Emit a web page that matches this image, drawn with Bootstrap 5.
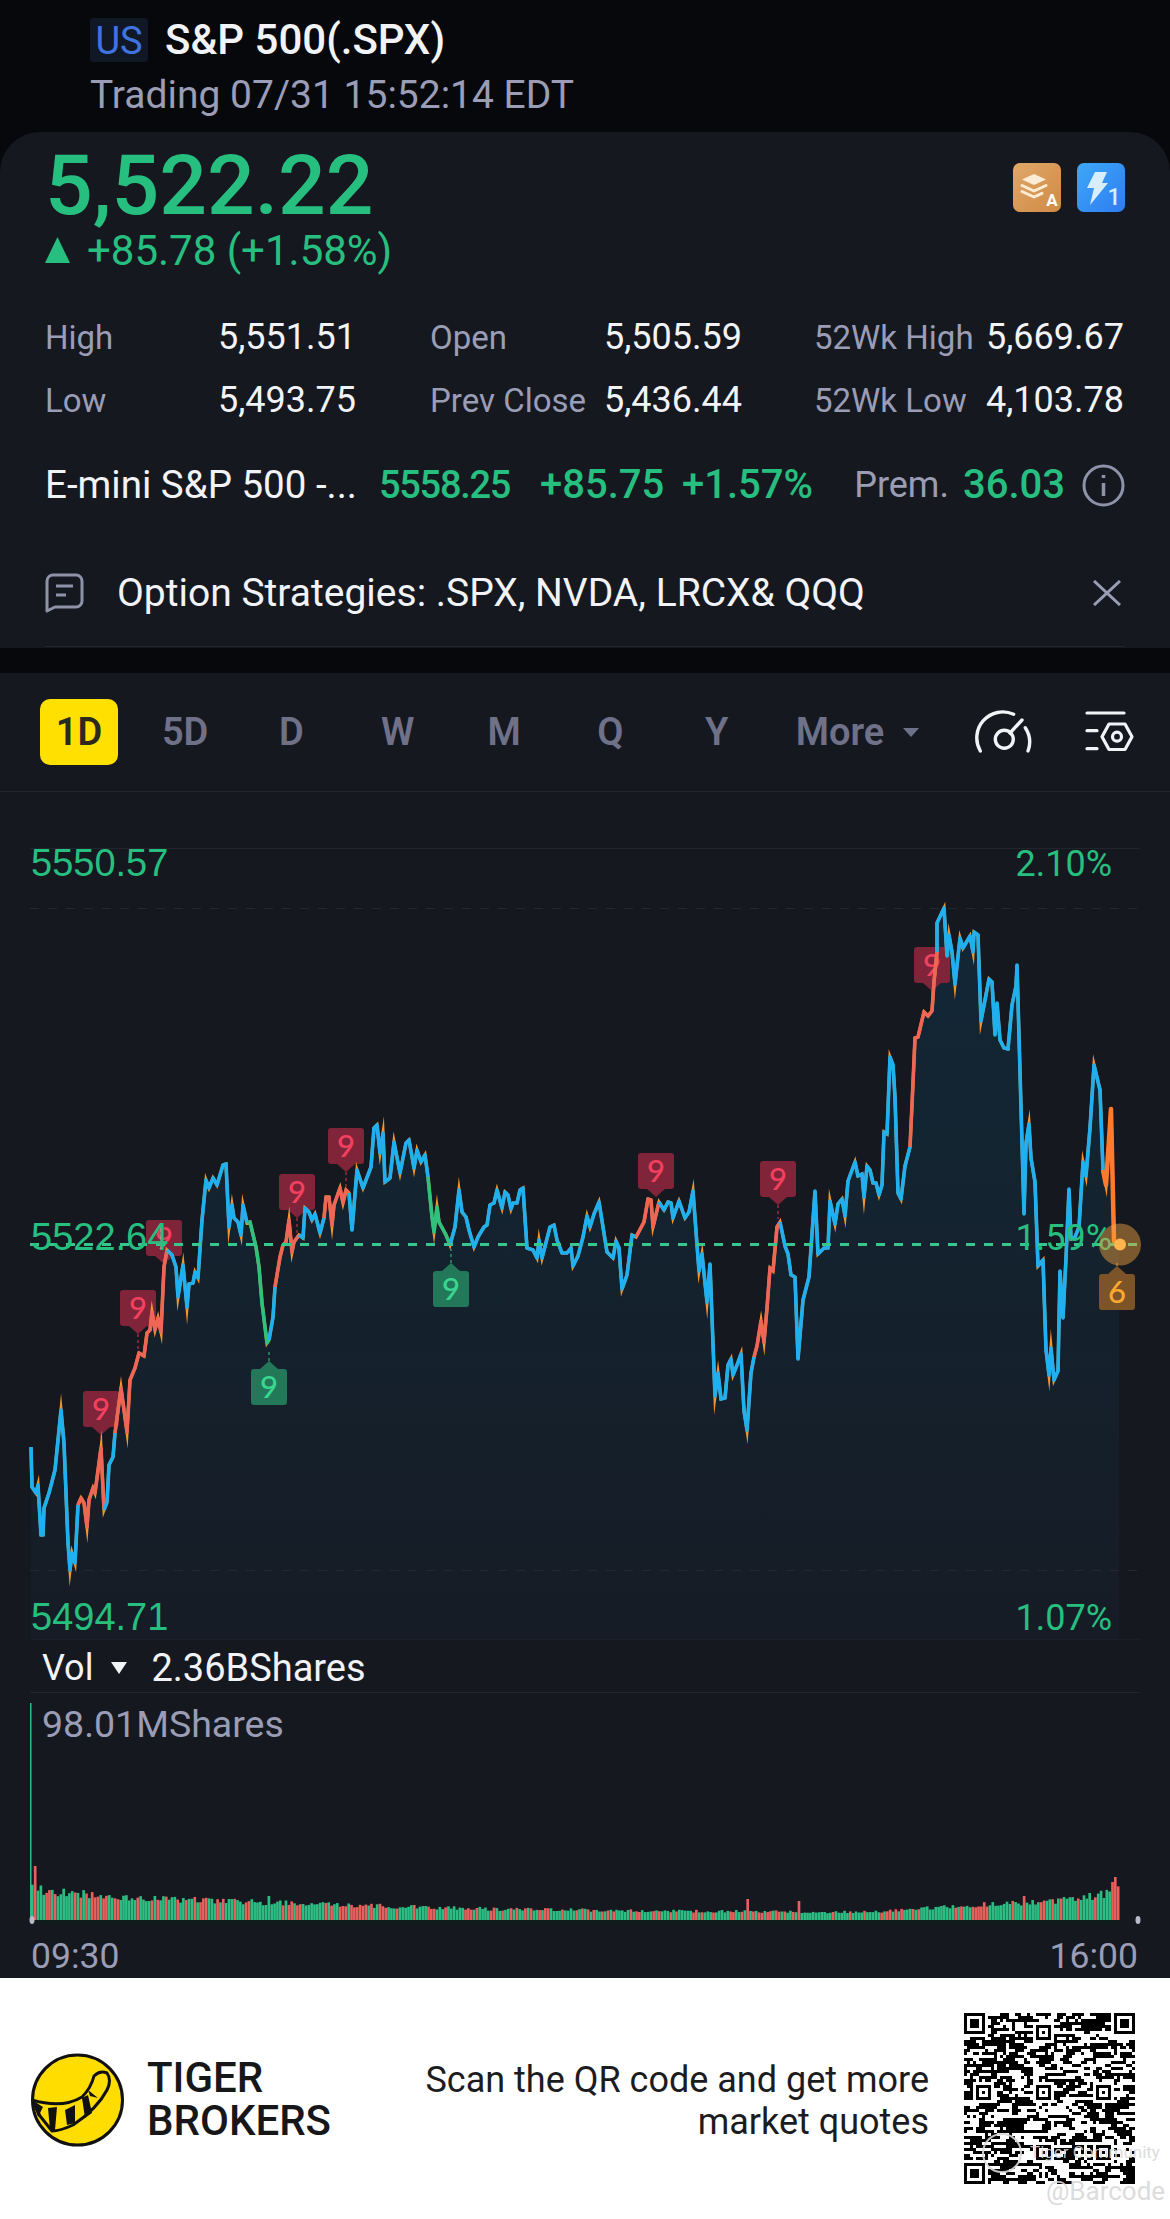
<!DOCTYPE html>
<html lang="en">
<head>
  <meta charset="UTF-8">
  <meta name="viewport" content="width=device-width, initial-scale=1">
  <title>S&amp;P 500 quote</title>
  <link href="https://cdn.jsdelivr.net/npm/bootstrap@5.3.0/dist/css/bootstrap.min.css" rel="stylesheet">
  <style>
    body {
      background-color: #07080c;
      font-family: Roboto, "Liberation Sans", sans-serif;
      width: 1170px;
      color: #f2f3f7;
    }
    svg { display: block; }
    .muted-text { color: #9a9db5; }
    .up-text { color: #27bf7f; }

    .quote-head { height: 132px; padding: 18px 0 0 90px; }
    .market-tag {
      width: 58px; height: 44px; margin-right: 17px; border-radius: 4px;
      background-color: #101826; color: #3f74e0; font-size: 38px; line-height: 46px; text-align: center;
    }
    .quote-title { font-size: 42px; line-height: 44px; font-weight: 500; }
    .quote-status { font-size: 39px; line-height: 44px; margin-top: 11px; }

    .quote-panel {
      height: 516px; padding: 0 45px; border-radius: 40px 40px 0 0;
      background-color: #161820;
    }
    .panel-inner { height: 515px; border-bottom: 1px solid #23252e; }
    .price-big { font-size: 84px; line-height: 84px; font-weight: 500; padding-top: 12px; }
    .price-change { font-size: 42px; line-height: 46px; }
    .up-arrow { width: 25px; height: 26px; margin-right: 17px; margin-top: 9px; }
    .level-badges { padding-top: 31px; }
    .stat-grid {
      display: grid; grid-template-columns: 173px 212px 174px 210px 172px auto;
      font-size: 36px; line-height: 63px; margin-top: 32px; padding-right: 2px;
    }
    .stat-name { font-size: 33px; }
    .future-row { font-size: 38.500px; line-height: 44px; margin-top: 31px; }
    .future-name { width: 334px; }
    .future-last { width: 161px; font-size: 38px; font-weight: 500; letter-spacing: -1.300px; }
    .future-move { width: 142px; font-size: 40px; font-weight: 500; }
    .future-pct { font-size: 40px; font-weight: 500; }
    .prem-name { font-size: 36px; margin-right: 14px; }
    .prem-value { font-size: 40px; font-weight: 500; margin-right: 17px; }
    .strategy-row { font-size: 39px; line-height: 44px; margin-top: 64px; }
    .strategy-text { margin-left: 9px; }

    .chart-section { margin-top: 25px; background-color: #161820; height: 1305px; }
    .range-bar { height: 119px; border-bottom: 1px solid #23252e; }
    .range-active {
      width: 78px; height: 66px; border-radius: 10px; margin-left: 40px;
      background-color: #ffe000; color: #2a2a1e; line-height: 66px; text-align: center;
    }
    .range-bar span, .range-active { font-size: 38px; font-weight: 600; }
    .range-item { color: #6f7189; width: 106.3px; text-align: center; }
    .range-first { margin-left: 14px; }
    .range-more { color: #6f7189; margin-left: 26px; white-space: nowrap; }
    .more-caret {
      width: 0; height: 0; margin-left: 19px;
      border-left: 8px solid transparent; border-right: 8px solid transparent; border-top: 9px solid #6f7189;
    }
    .gauge-icon { margin-left: 53px; }
    .tune-icon { margin-left: 51px; }
    .chart-label { font-family: "Liberation Sans", sans-serif; font-size: 38px; fill: #27bf7f; }
    .chart-pct { font-family: Roboto, sans-serif; font-size: 36px; fill: #27bf7f; text-anchor: end; }
    .badge-digit { font-family: Lato, sans-serif; font-size: 31px; font-weight: 500; text-anchor: middle; }

    .vol-row {
      height: 53px; margin: 0 30px; padding: 4px 0 0 12px;
      border-bottom: 1px solid #23252e; font-size: 38px; line-height: 44px;
    }
    .vol-name { font-size: 36px; }
    .vol-caret {
      width: 0; height: 0; margin: 0 24px 0 18px;
      border-left: 8px solid transparent; border-right: 8px solid transparent; border-top: 12px solid #f2f3f7;
    }
    .vol-box { position: relative; height: 241px; }
    .vol-peak { position: absolute; left: 42px; top: 10px; font-size: 37.500px; line-height: 42px; }
    .time-row { height: 44px; padding: 0 32px 0 31px; font-size: 35.500px; line-height: 44px; }

    .promo-band { position: relative; height: 241px; background-color: #fff; color: #111; }
    .brand-logo { margin: 75px 0 0 31px; }
    .brand-name { font-size: 42px; line-height: 43px; font-weight: 500; margin: 78px 0 0 23px; color: #17171a; }
    .promo-copy {
      position: absolute; right: 241px; top: 81px;
      font-size: 36px; line-height: 42px; text-align: right; color: #1c1c1f;
    }
    .qr-box { position: absolute; left: 964px; top: 35px; }
    .wm-text { position: absolute; color: rgba(215, 215, 215, .9); white-space: nowrap; }
    .wm-community { left: 1030px; top: 164px; font-size: 17px; line-height: 20px; }
    .wm-barcode { left: 1046px; top: 198px; font-size: 26px; line-height: 30px; }
    .wm-ring { position: absolute; left: 982px; top: 155px; width: 40px; height: 40px; border: 2px solid rgba(215, 215, 215, .9); border-radius: 50%; }
  </style>
</head>
<body class="m-0">

  <header class="quote-head">
    <div class="d-flex align-items-center">
      <div class="market-tag">US</div>
      <div class="quote-title">S&amp;P 500(.SPX)</div>
    </div>
    <div class="quote-status muted-text">Trading 07/31 15:52:14 EDT</div>
  </header>

  <section class="quote-panel">
    <div class="panel-inner">
      <div class="d-flex justify-content-between">
        <div>
          <div class="price-big up-text">5,522.22</div>
          <div class="price-change up-text d-flex">
            <svg class="up-arrow" viewBox="0 0 25 26"><path d="M12.5 0 25 26H0z" fill="#27bf7f"/></svg>
            <span>+85.78 (+1.58%)</span>
          </div>
        </div>
        <div class="level-badges d-flex gap-3">
          <svg width="48" height="49" viewBox="0 0 48 49">
            <defs><linearGradient id="goldFill" x1="0" y1="0" x2="1" y2="1"><stop offset="0" stop-color="#e0a868"/><stop offset="1" stop-color="#d08a45"/></linearGradient></defs>
            <rect width="48" height="49" rx="7" fill="url(#goldFill)"/>
            <path d="M21 11 33 16.500 21 22 9 16.500z" fill="#fbecd6"/>
            <path d="M9 22.500 21 28 33 22.500M9 28.500 21 34 29 30.300" fill="none" stroke="#fbecd6" stroke-width="3" stroke-linecap="round" stroke-linejoin="round"/>
            <text x="39" y="43" text-anchor="middle" font-family="Roboto, sans-serif" font-size="17" font-weight="700" fill="#fff">A</text>
          </svg>
          <svg width="48" height="49" viewBox="0 0 48 49">
            <defs><linearGradient id="blueFill" x1="0" y1="0" x2="1" y2="1"><stop offset="0" stop-color="#3da8f8"/><stop offset="1" stop-color="#2f7cf0"/></linearGradient></defs>
            <rect width="48" height="49" rx="7" fill="url(#blueFill)"/>
            <path d="M18 9h12l-5 11h6L13 42l4-17h-7z" fill="#d8eeff"/>
            <text x="37" y="42" text-anchor="middle" font-family="Roboto, sans-serif" font-size="23" font-weight="500" fill="#d8eeff">1</text>
          </svg>
        </div>
      </div>

      <div class="stat-grid">
        <div class="muted-text stat-name">High</div><div>5,551.51</div>
        <div class="muted-text stat-name">Open</div><div>5,505.59</div>
        <div class="muted-text stat-name">52Wk High</div><div class="text-end">5,669.67</div>
        <div class="muted-text stat-name">Low</div><div>5,493.75</div>
        <div class="muted-text stat-name">Prev Close</div><div>5,436.44</div>
        <div class="muted-text stat-name">52Wk Low</div><div class="text-end">4,103.78</div>
      </div>

      <div class="future-row d-flex align-items-center">
        <div class="future-name text-truncate">E-mini S&amp;P 500 -...</div>
        <div class="future-last up-text">5558.25</div>
        <div class="future-move up-text">+85.75</div>
        <div class="future-pct up-text">+1.57%</div>
        <div class="prem-name muted-text ms-auto">Prem.</div>
        <div class="prem-value up-text">36.03</div>
        <svg width="43" height="43" viewBox="0 0 43 43">
          <circle cx="21.500" cy="21.500" r="19.500" fill="none" stroke="#8f92a8" stroke-width="3"/>
          <path d="M21.500 19v13M21.500 11v3" stroke="#8f92a8" stroke-width="3.500"/>
        </svg>
      </div>

      <div class="strategy-row d-flex align-items-center">
        <svg class="me-4" width="39" height="40" viewBox="0 0 39 40">
          <path d="M8 2h23a6 6 0 0 1 6 6v20a6 6 0 0 1-6 6H10l-8 4V8a6 6 0 0 1 6-6z" fill="none" stroke="#8f92a8" stroke-width="3" stroke-linejoin="round"/>
          <path d="M11 13h17M11 22h10" stroke="#8f92a8" stroke-width="3"/>
        </svg>
        <div class="strategy-text flex-grow-1">Option Strategies: .SPX, NVDA, LRCX&amp; QQQ</div>
        <svg class="me-1" width="28" height="26" viewBox="0 0 28 26">
          <path d="M1 1 27 25M27 1 1 25" stroke="#9a9db5" stroke-width="3"/>
        </svg>
      </div>
    </div>
  </section>

  <section class="chart-section">
    <div class="range-bar d-flex align-items-center">
      <div class="range-active">1D</div>
      <span class="range-item range-first">5D</span>
      <span class="range-item">D</span>
      <span class="range-item">W</span>
      <span class="range-item">M</span>
      <span class="range-item">Q</span>
      <span class="range-item">Y</span>
      <span class="range-more">More</span>
      <div class="more-caret"></div>
      <svg class="gauge-icon" width="62" height="50" viewBox="30 26 62 50">
        <g fill="none" stroke="#f2f3f7" stroke-width="3.400" stroke-linecap="round">
          <circle cx="62.300" cy="58.300" r="9"/>
          <path d="M38.300 70A26 26 0 0 1 71.600 33.300M83.300 46.700A26 26 0 0 1 86 70M68 52 80 39"/>
        </g>
      </svg>
      <svg class="tune-icon" width="50" height="44" viewBox="146 32 50 44">
        <g fill="none" stroke="#f2f3f7" stroke-width="3.200" stroke-linecap="round" stroke-linejoin="round">
          <path d="M148 35h37M148 52.700h10M148 70.700h10"/>
          <path d="M163 58.700 170 46h16l7 12.700-7 12.800h-16z"/>
          <circle cx="178" cy="58.700" r="4.500"/>
        </g>
      </svg>
    </div>

    <svg id="priceChart" width="1170" height="848" viewBox="0 792 1170 848"></svg>

    <div class="vol-row d-flex align-items-center">
      <span class="vol-name">Vol</span><div class="vol-caret"></div><span>2.36BShares</span>
    </div>
    <div class="vol-box">
      <svg id="volChart" width="1170" height="241" viewBox="0 1694 1170 241"></svg>
      <div class="vol-peak muted-text">98.01MShares</div>
    </div>
    <div class="time-row d-flex justify-content-between muted-text">
      <span>09:30</span><span>16:00</span>
    </div>
  </section>

  <section class="promo-band d-flex align-items-start">
    <svg class="brand-logo" width="93" height="94" viewBox="21 23 93 94">
      <defs><clipPath id="logoClip"><circle cx="67.500" cy="70" r="45"/></clipPath></defs>
      <circle cx="67.500" cy="70" r="45" fill="#ffdd00" stroke="#111" stroke-width="3"/>
      <g clip-path="url(#logoClip)">
        <path d="M22 70Q52 79 72 67 81 58 84 46 90 40 97 43 102 50 97 60 87 79 63 95 50 101 42 101L30 86z" fill="#ffdd00" stroke="#111" stroke-width="3" stroke-linejoin="round"/>
        <path d="M22 70 33 77 28 87z M38 78 47 77 45 100 40 100z M55 80 65 75 65 93 57 95z M72 68 78 65 82 83 75 88z M78 60 88 68 80 66z" fill="#111"/>
      </g>
    </svg>
    <div class="brand-name">TIGER<br>BROKERS</div>
    <div class="promo-copy">Scan the QR code and get more<br>market quotes</div>
    <svg class="qr-box" id="qrCode" width="171" height="171" viewBox="0 0 57 57" shape-rendering="crispEdges"></svg>
    <div class="wm-ring"></div>
    <div class="wm-text wm-community">Tiger Community</div>
    <div class="wm-text wm-barcode">@Barcode</div>
  </section>

  <script>
    const BLUE = "#1fb0f0", SALMON = "#ee6656", GREEN = "#2fc27c", ORANGE = "#ff7a2c";

    // traced off the reference, in page pixels; each run carries on from the last point of the one before
    const runs = [
      [BLUE, "31,1447 32,1487 36,1493 38,1485 41,1535 43,1535 44,1508 49,1493 55,1470 61,1410 64,1443 68,1543 70,1570 72,1553 75,1563 78,1505"],
      [SALMON, "81,1498 84,1503 87,1527 89,1500 93,1488 95,1493 101,1448 104,1510"],
      [BLUE, "107,1502 109,1465 113,1457 115,1433"],
      [SALMON, "121,1388 127,1432 130,1380 135,1368 139,1353 144,1356 147,1333 150,1330 152,1312 155,1330 158,1318 161,1332 164,1267 167,1250"],
      [BLUE, "172,1255 176,1267 178,1297 183,1265 187,1307 189,1284 193,1283 195,1272 198,1278 202,1220 206,1180 209,1188 213,1178 217,1185 223,1165 226,1164 229,1227 232,1205 234,1218 238,1222 241,1235 243,1205 247,1223"],
      [GREEN, "250,1222 256,1247 259,1267 262,1303 267,1343 269,1340"],
      [BLUE, "273,1317 275,1287"],
      [SALMON, "280,1257 283,1245 286,1242 289,1220 292,1252 294,1242 299,1235"],
      [BLUE, "303,1238 305,1208 309,1212 312,1220 315,1214 320,1233 324,1218"],
      [SALMON, "326,1197 329,1197 332,1225 334,1205 340,1188 343,1203 346,1190 349,1193"],
      [BLUE, "352,1230 357,1170 363,1188 371,1167 374,1128 377,1125 380,1153 383,1133 385,1182 390,1178 394,1142 400,1173 406,1143 409,1140 414,1168 417,1150 421,1162 425,1155 428,1177"],
      [GREEN, "432,1217 434,1232 437,1207 439,1222 446,1235 450,1245"],
      [BLUE, "455,1227 459,1190 462,1212 466,1217 469,1230 474,1247 478,1237 484,1227 487,1225 490,1205 494,1203 497,1190 502,1208 505,1192 508,1195 511,1209 513,1203 517,1203 520,1190 523,1188 527,1248 533,1250 537,1258 539,1240 542,1258 550,1227 554,1225 557,1240 562,1253 567,1253 571,1248 573,1266 578,1256 583,1237 587,1216 590,1227 594,1214 599,1202 607,1252 613,1258 616,1241 619,1248 622,1289 627,1275 632,1235 636,1237"],
      [SALMON, "644,1222 648,1199 651,1200 653,1227 659,1202"],
      [BLUE, "664,1210 668,1202 671,1203 673,1218 679,1201 685,1218 689,1212 693,1191 698,1258 699,1271 702,1254 707,1302 710,1264 715,1396 718,1373 721,1399 725,1398 728,1365 731,1359 733,1375 737,1365 741,1354 744,1411 747,1430 751,1373 754,1357"],
      [SALMON, "757,1346 761,1321 764,1342 767,1308 770,1268 773,1271 777,1227 780,1222"],
      [BLUE, "785,1246 788,1254 791,1275 795,1277 798,1359 803,1300 809,1277 815,1191 818,1254 824,1248 828,1248 830,1201 835,1224 838,1204 842,1199 845,1216 848,1181 855,1162 858,1176 862,1174 864,1197 867,1166 870,1170 873,1183 876,1183 879,1195 882,1185 884,1132 887,1134 890,1057 893,1065 895,1097 898,1193 901,1199 905,1166 910,1147"],
      [SALMON, "912,1105 915,1038 918,1037 924,1012 928,1016 932,1011 934,982 937,952"],
      [BLUE, "937,923 944,908 947,956 949,935 952,952 955,984 960,938 963,948 970,936 973,952 974,932 978,935 981,1021 989,979 992,982 995,1035 997,1003 1000,1040 1004,1048 1008,1049 1012,1005 1016,986 1017,965 1024,1214 1026,1143 1029,1124 1031,1158 1035,1182 1038,1266 1043,1260 1046,1350 1049,1375 1051,1348 1054,1380 1058,1371 1060,1271 1063,1318 1066,1258 1069,1189 1071,1239 1075,1237 1079,1227 1083,1162 1086,1176 1090,1128 1094,1065 1100,1090 1103,1170"],
      [ORANGE, "1106,1185 1111,1109 1114,1241 1120,1244"]
    ];

    // [center x, center y, digit, colour set, tip direction, stem length]
    const badges = [
      [101, 1409, "9", "red", 1, 13], [138, 1308, "9", "red", 1, 18], [164, 1238, "9", "red", 1, 4],
      [297, 1192, "9", "red", 1, 16], [346, 1146, "9", "red", 1, 16], [656, 1171, "9", "red", 1, 0],
      [778, 1179, "9", "red", 1, 14], [932, 965, "9", "red", 1, 4],
      [269, 1387, "9", "green", -1, 12], [451, 1289, "9", "green", -1, 14], [1117, 1292, "6", "amber", -1, 4]
    ];
    const badgeColours = {
      red: ["#7f2439", "#f4405f"], green: ["#23785a", "#3ad690"], amber: ["#7d5428", "#fba92e"]
    };

    function drawPriceChart() {
      const allPts = [];
      let lines = "";
      runs.forEach(([colour, pts]) => {
        const start = allPts.length ? allPts[allPts.length - 1] + " " : "";
        lines += `<polyline points="${start}${pts}" fill="none" stroke="${colour}" stroke-width="${colour === ORANGE ? 4.5 : 3.6}" stroke-linejoin="round"/>`;
        pts.split(" ").forEach(p => allPts.push(p));
      });
      const joined = allPts.join(" ");

      let badgeMarkup = "";
      badges.forEach(([x, y, digit, kind, dir, stem]) => {
        const [boxFill, textFill] = badgeColours[kind];
        const edge = y + dir * 18;
        const tip = edge + dir * 8;
        badgeMarkup += `<path d="M${x} ${tip}v${dir * stem}" stroke="${boxFill}" stroke-width="2" stroke-dasharray="3 3"/>`
          + `<rect x="${x - 18}" y="${y - 18}" width="36" height="36" rx="3" fill="${boxFill}"/>`
          + `<path d="M${x - 9} ${edge}L${x} ${tip}L${x + 9} ${edge}z" fill="${boxFill}"/>`
          + `<text class="badge-digit" x="${x}" y="${y + 11}" fill="${textFill}">${digit}</text>`;
      });

      document.getElementById("priceChart").innerHTML = `
        <defs><linearGradient id="areaFill" x1="0" y1="0" x2="0" y2="1">
          <stop offset="0" stop-color="#122736"/><stop offset=".5" stop-color="#14222e"/><stop offset="1" stop-color="#161c26"/>
        </linearGradient></defs>
        <polygon points="31,1640 ${joined} 1119,1244 1119,1640" fill="url(#areaFill)"/>
        <path d="M30 848.500H1140M30 1640H1140" stroke="#23252e"/>
        <path d="M30 908.500H1140M30 1570.500H1140" stroke="#262831" stroke-dasharray="9 9"/>
        ${badgeMarkup}
        <polyline points="${joined}" fill="none" stroke="#f2962a" stroke-width="3.200" stroke-linejoin="miter" stroke-miterlimit="12"/>
        ${lines}
        <path d="M30 1244.500H1140" stroke="#35c78d" stroke-width="3" stroke-dasharray="9 9"/>
        <text class="chart-label" x="31" y="876">5550.57</text>
        <text class="chart-pct" x="1112" y="876">2.10%</text>
        <text class="chart-label" x="31" y="1250">5522.64</text>
        <text class="chart-pct" x="1112" y="1250">1.59%</text>
        <text class="chart-label" x="31" y="1630">5494.71</text>
        <text class="chart-pct" x="1112" y="1630">1.07%</text>
        <circle cx="1120" cy="1244.500" r="21" fill="#f9a640" fill-opacity=".45"/>
        <circle cx="1120" cy="1244.500" r="6" fill="#fdb54c"/>`;
    }

    // small repeatable generator so the bars and the QR come out the same each run
    function seeded(seed) {
      return () => (seed = (seed * 1664525 + 1013904223) >>> 0) / 4294967296;
    }

    function volumeEnvelope(x) {
      const stops = [[31, 42], [40, 30], [70, 28], [110, 24], [200, 20], [350, 15], [500, 11], [700, 9], [870, 8], [950, 14], [1050, 19], [1095, 25], [1118, 30]];
      for (let i = 1; i < stops.length; i++) {
        if (x <= stops[i][0]) {
          const [x0, y0] = stops[i - 1], [x1, y1] = stops[i];
          return y0 + (y1 - y0) * (x - x0) / (x1 - x0);
        }
      }
      return 30;
    }

    function drawVolume() {
      const rand = seeded(4711);
      const spikes = { 268: 24, 746: 21, 797: 19, 1022: 24, 1113: 43, 1110: 38, 33: 54 };
      let bars = "";
      for (let i = 0; i < 382; i++) {
        const x = 31 + i * 2.85;
        let h = volumeEnvelope(x) * (0.82 + rand() * 0.32);
        let colour = rand() < 0.68 ? "#2dbd82" : "#e8605c";
        Object.keys(spikes).forEach(s => {
          if (Math.abs(s - x) < 1.5) {
            h = spikes[s];
            colour = s == 268 ? "#2dbd82" : "#e8605c";
          }
        });
        bars += `<rect x="${x.toFixed(2)}" y="${(1921 - h).toFixed(1)}" width="2.650" height="${h.toFixed(1)}" fill="${colour}"/>`;
      }
      document.getElementById("volChart").innerHTML = `
        <rect x="30" y="1704" width="1.500" height="217" fill="#2dbd82"/>
        ${bars}
        <rect x="31" y="1921" width="1087" height="4" fill="#101c1a"/>
        <ellipse cx="32" cy="1921" rx="2.500" ry="4" fill="#b8bac8"/>
        <ellipse cx="1138" cy="1921" rx="2.500" ry="4" fill="#b8bac8"/>`;
    }

    function drawQr() {
      const size = 57;
      const rand = seeded(20240731);
      const grid = [];
      for (let y = 0; y < size; y++) {
        grid.push([]);
        for (let x = 0; x < size; x++) {
          const keep = x > 0 && rand() < 0.42;
          grid[y].push(keep ? grid[y][x - 1] : rand() < 0.52);
        }
      }
      const square = (ox, oy, n, ringAt) => {
        for (let y = -1; y <= n; y++) {
          for (let x = -1; x <= n; x++) {
            const gy = oy + y, gx = ox + x;
            if (gy < 0 || gx < 0 || gy >= size || gx >= size) continue;
            const outside = x < 0 || y < 0 || x >= n || y >= n;
            const d = Math.min(x, y, n - 1 - x, n - 1 - y);
            grid[gy][gx] = !outside && ringAt(d);
          }
        }
      };
      const finder = d => d === 0 || d >= 2;
      square(0, 0, 7, finder);
      square(50, 0, 7, finder);
      square(0, 50, 7, finder);
      const align = d => d === 0 || d === 2;
      [[6, 26], [26, 6], [26, 26], [46, 26], [26, 46], [46, 46]].forEach(([x, y]) => square(x - 2, y - 2, 5, align));

      let cells = "";
      grid.forEach((row, y) => row.forEach((on, x) => {
        if (on) cells += `<rect x="${x}" y="${y}" width="1" height="1"/>`;
      }));
      document.getElementById("qrCode").innerHTML = cells;
    }

    drawPriceChart();
    drawVolume();
    drawQr();
  </script>
  <script src="https://cdn.jsdelivr.net/npm/bootstrap@5.3.0/dist/js/bootstrap.bundle.min.js"></script>
</body>
</html>
